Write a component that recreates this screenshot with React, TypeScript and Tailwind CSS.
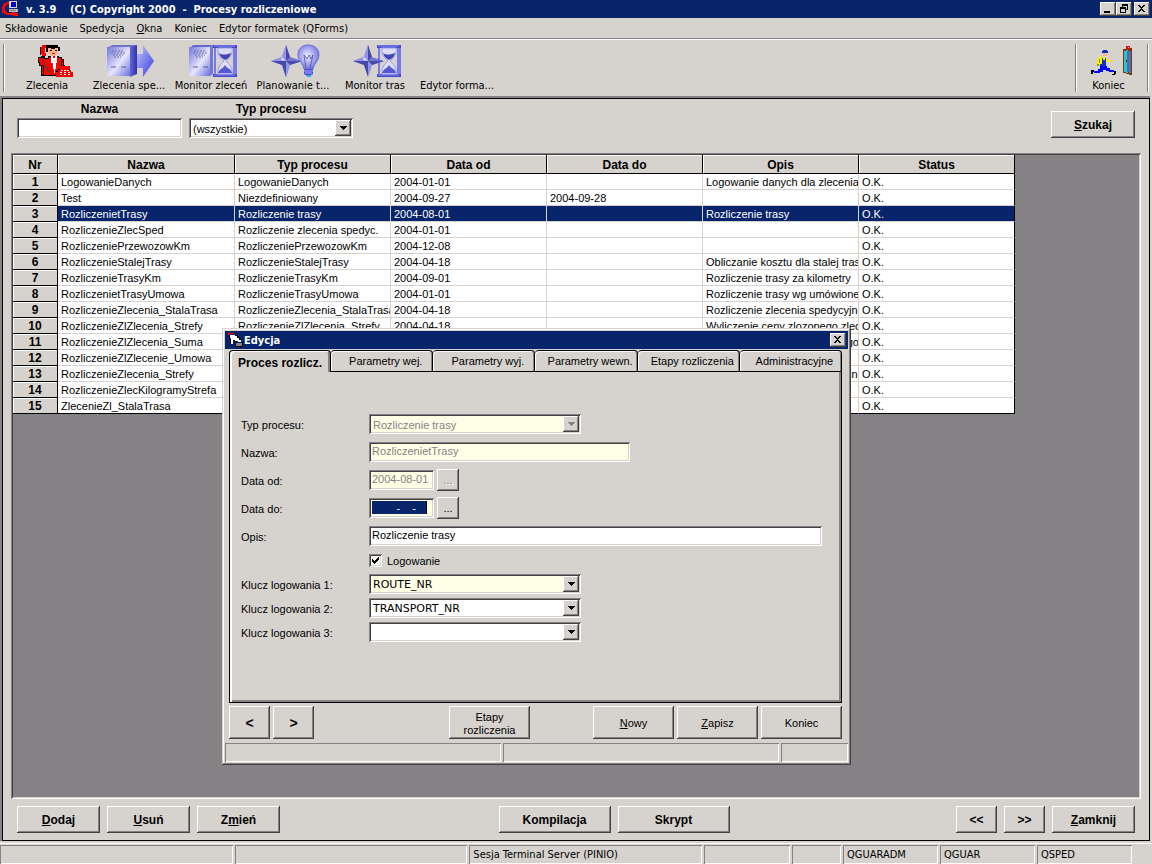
import clsx from "clsx";
import { ButtonHTMLAttributes, InputHTMLAttributes, PropsWithChildren, ReactNode, useState } from "react";

const RAISED =
  "shadow-[inset_-1px_-1px_0_#424142,inset_1px_1px_0_#fff,inset_-2px_-2px_0_#848284]";
const SUNKEN =
  "shadow-[inset_1px_1px_0_#848284,inset_-1px_-1px_0_#fff,inset_2px_2px_0_#424142,inset_-2px_-2px_0_#d6d3ce]";
const PANEL = "shadow-[inset_1px_1px_0_#848284,inset_-1px_-1px_0_#fff]";
const TAHOMA = "font-['DejaVu_Sans_Condensed','Liberation_Sans',sans-serif]";

interface Row {
  name: string;
  type: string;
  from: string;
  to?: string;
  desc?: string;
}

const rows: Row[] = [
  { name: "LogowanieDanych", type: "LogowanieDanych", from: "2004-01-01", desc: "Logowanie danych dla zlecenia" },
  { name: "Test", type: "Niezdefiniowany", from: "2004-09-27", to: "2004-09-28" },
  { name: "RozliczenietTrasy", type: "Rozliczenie trasy", from: "2004-08-01", desc: "Rozliczenie trasy" },
  { name: "RozliczenieZlecSped", type: "Rozliczenie zlecenia spedyc.", from: "2004-01-01" },
  { name: "RozliczeniePrzewozowKm", type: "RozliczeniePrzewozowKm", from: "2004-12-08" },
  { name: "RozliczenieStalejTrasy", type: "RozliczenieStalejTrasy", from: "2004-04-18", desc: "Obliczanie kosztu dla stalej trasy" },
  { name: "RozliczenieTrasyKm", type: "RozliczenieTrasyKm", from: "2004-09-01", desc: "Rozliczenie trasy za kilometry" },
  { name: "RozliczenietTrasyUmowa", type: "RozliczenieTrasyUmowa", from: "2004-01-01", desc: "Rozliczenie trasy wg umówionej" },
  { name: "RozliczenieZlecenia_StalaTrasa", type: "RozliczenieZlecenia_StalaTrasa", from: "2004-04-18", desc: "Rozliczenie zlecenia spedycyjne" },
  { name: "RozliczenieZlZlecenia_Strefy", type: "RozliczenieZlZlecenia_Strefy", from: "2004-04-18", desc: "Wyliczenie ceny zlozonego zlec" },
  { name: "RozliczenieZlZlecenia_Suma", type: "RozliczenieZlZlecenia_Suma", from: "2004-04-18", desc: "Rozliczenie zlecenia zlozonego" },
  { name: "RozliczenieZlZlecenie_Umowa", type: "RozliczenieZlZlecenie_Umowa", from: "2004-04-18" },
  { name: "RozliczenieZlecenia_Strefy", type: "RozliczenieZlecenia_Strefy", from: "2004-04-18", desc: "Rozliczenie zlecenia spedycyjne" },
  { name: "RozliczenieZlecKilogramyStrefa", type: "RozliczenieZlecKilogramyStrefa", from: "2004-04-18" },
  { name: "ZlecenieZl_StalaTrasa", type: "ZlecenieZl_StalaTrasa", from: "2004-04-18" },
];

const columns = ["Nr", "Nazwa", "Typ procesu", "Data od", "Data do", "Opis", "Status"];

const tabs = [
  "Proces rozlicz.",
  "Parametry wej.",
  "Parametry wyj.",
  "Parametry wewn.",
  "Etapy rozliczenia",
  "Administracyjne",
];

/* ---------- icons ---------- */

const Gradients = () => (
  <svg width="0" height="0" className="absolute" aria-hidden="true">
    <defs>
      <linearGradient id="page" x1="0" y1="0" x2="1" y2="1">
        <stop offset="0" stopColor="#7476dc" />
        <stop offset="0.55" stopColor="#e6e6fc" />
        <stop offset="1" stopColor="#6a6ce0" />
      </linearGradient>
      <linearGradient id="side" x1="0" y1="0" x2="1" y2="0">
        <stop offset="0" stopColor="#6466dc" />
        <stop offset="1" stopColor="#3032a0" />
      </linearGradient>
      <linearGradient id="arrow" x1="0" y1="0" x2="1" y2="1">
        <stop offset="0" stopColor="#c4c6fa" />
        <stop offset="1" stopColor="#3436e0" />
      </linearGradient>
      <radialGradient id="bulb" cx="0.45" cy="0.45" r="0.6">
        <stop offset="0" stopColor="#f0f0ff" />
        <stop offset="1" stopColor="#6a6cdc" />
      </radialGradient>
    </defs>
  </svg>
);

const Sheet = () => (
  <g>
    <path d="M2 2 4 0H24L21 2Z" fill="#6668c8" />
    <path d="M0 2H21V31H0Z" fill="url(#page)" />
    <path d="M21 2 24 0V29L21 31Z" fill="#7476d4" />
    <path d="M5 6H17M4 8H19M6 10H16M7 12H14" stroke="#5a5c94" strokeDasharray="2 1" strokeWidth="0.8" />
    <path d="M4 22H9M14 22H19" stroke="#5a5c94" />
  </g>
);

const Hourglass = () => (
  <g>
    <path d="M0 0H24V3H0ZM0 29H24V32H0Z" fill="#4648c4" />
    <path d="M1 1H22M1 30H22" stroke="#8c8eff" />
    <path d="M2 3V29M21 3V29M23 3V29" stroke="#5254f0" strokeWidth="1.4" />
    <path d="M5 3H19C20 10 16 13 13 16C16 19 20 22 19 29H5C4 22 8 19 11 16C8 13 4 10 5 3Z" fill="#dcdcfa" stroke="#9a9cee" />
    <path d="M6 8C10 11 15 9 18 8C17 13 14 14 12 15C10 14 7 12 6 8Z" fill="#4446b4" />
    <path d="M5 28C7 23 10 24 12 20C14 24 18 23 19 28Z" fill="#5658cc" />
  </g>
);

const Star = () => (
  <g>
    <path d="M15 0 19 12 31 16 19 20 15 32 11 20 0 16 11 12Z" fill="#7476d0" />
    <path d="M15 0 19 12 15 16ZM31 16 19 20 15 16ZM15 32 11 20 15 16ZM0 16 11 20 15 16Z" fill="#484aa8" />
    <path d="M15 0 11 12 15 16ZM0 16 11 12 15 16ZM15 32 19 20 15 16Z" fill="#9294ec" />
    <path d="M11 12 15 16 10 15Z" fill="#dcdcfc" />
  </g>
);

const Bulb = () => (
  <g>
    <path d="M10 0C4 0 0 4 0 10C0 16 5 18 6 24H15C16 18 21 16 21 10C21 4 17 0 10 0Z" fill="url(#bulb)" stroke="#6c6edc" />
    <path d="M8 23 6 10 9 14 11 10 13 14 15 10 12 23" fill="none" stroke="#5052a8" strokeWidth="0.8" />
    <path d="M6 24H15V29L12 31H9L6 29Z" fill="#4c4ed8" />
    <path d="M6 26H15M7 28H14" stroke="#a8aaff" />
    <path d="M9 30H13V32H9Z" fill="#29aaff" />
  </g>
);

const IconBox = ({ children }: PropsWithChildren) => (
  <svg width="48" height="32" viewBox="0 0 48 32" className="ml-1 overflow-visible" aria-hidden="true">
    {children}
  </svg>
);

const CallerIcon = () => (
  <IconBox>
    <g shapeRendering="crispEdges">
      <path d="M21 0H33V2H35V6H33V4H24V7H21Z" fill="#000" />
      <path d="M23 3H26V4H30V3H33V9H31V11H25V9H23Z" fill="#ffb68c" />
      <path d="M25 5H27V6H25ZM30 5H32V6H30Z" fill="#000" />
      <path d="M27 8H30V9H27Z" fill="#f00" />
      <path d="M13 12H16V11H20V13H23V11H34V12H37V14H39V20H40V31H16V21H14V18H13Z" fill="#000" />
      <path d="M14 13H19V14H24V12H33V13H36V15H38V30H17V20H15V17H14Z" fill="#f00" />
      <path d="M16 2H17V0H21V3H20V8H21V11H17V9H16Z" fill="#f00" />
      <path d="M15 2H16V10H15ZM17 11H20V12H17Z" fill="#000" />
      <path d="M26 11H32V18H31V24H30V28H29V24H28V18H26Z" fill="#fff" />
      <path d="M28 11H30V13H28Z" fill="#f00" />
      <path d="M18 13H19V17H20V20H21V22H23V25H25V28H27V30H26V28H24V26H22V23H20V20H19V17H18Z" fill="#424142" />
      <path d="M18 20H19V31H18ZM36 16H37V21H36Z" fill="#000" />
      <path d="M33 21H45V24H43V25H46V27H48V32H31V27H33V25H35V24H33Z" fill="#f00" />
      <path d="M33 24H35V25H33V27H31V26H32V25H33ZM43 24H45V25H43Z" fill="#000" />
      <path d="M36 25H38V26H36ZM39 25H41V26H39ZM42 25H44V26H42ZM35 27H37V28H35ZM39 27H41V28H39ZM43 27H45V28H43ZM35 29H37V30H35ZM39 29H41V30H39ZM43 29H45V30H43Z" fill="#fff" />
    </g>
  </IconBox>
);

const SendIcon = () => (
  <IconBox>
    <path d="M1 2 6 0H30L24 3Z" fill="#7072cc" />
    <path d="M0 2H23V31H0Z" fill="url(#page)" />
    <path d="M23 2 30 0V29L23 32Z" fill="url(#side)" />
    <path d="M5 6H17M4 8H19M6 10H16M7 12H14" stroke="#5a5c94" strokeDasharray="2 1" strokeWidth="0.8" />
    <path d="M4 22H9M14 22H19" stroke="#5a5c94" />
    <path d="M30 9H36V0L47 16 36 32V23H30Z" fill="url(#arrow)" />
  </IconBox>
);

const MonitorOrdersIcon = () => (
  <IconBox>
    <Sheet />
    <g transform="translate(24 0)">
      <Hourglass />
    </g>
  </IconBox>
);

const PlanIcon = () => (
  <IconBox>
    <Star />
    <g transform="translate(27 0)">
      <Bulb />
    </g>
  </IconBox>
);

const MonitorRoutesIcon = () => (
  <IconBox>
    <Star />
    <g transform="translate(24 0)">
      <Hourglass />
    </g>
  </IconBox>
);

const ExitIcon = () => (
  <svg width="42" height="32" viewBox="0 0 42 32" className="ml-1.5" aria-hidden="true">
    <g shapeRendering="crispEdges">
      <path d="M12 5H16V6H17V8H11V6H12Z" fill="#0030c0" />
      <path d="M12 8H16V10H17V11H12Z" fill="#ffb68c" />
      <path d="M8 12H15V14H17V15H20V17H15V21H8V19H6V14H8Z" fill="#f7f300" />
      <path d="M20 15H23V16H20Z" fill="#ffb68c" />
      <path d="M8 14H9V18H8ZM6 19H8V21H6Z" fill="#949200" />
      <path d="M11 13H12V15H14V13H15V21H9V19H11Z" fill="#1030d0" />
      <path d="M9 21H16V23H19V25H23V27H18V26H15V25H12V27H9V28H3V26H7V24H9Z" fill="#0000ff" />
      <path d="M0 25H3V27H2V29H0ZM23 26H25V29H24V30H21V29H23Z" fill="#000" />
      <path d="M32 4H35V3H41V30H38V29H35V28H32Z" fill="#7b3910" />
      <path d="M33 6H35V5H37V28H35V27H33Z" fill="#29c6ce" />
      <path d="M36 6H40V28H38V27H36Z" fill="#4a6dad" />
      <path d="M35 15H36V17H35Z" fill="#000" />
      <path d="M35 1H39V4H38V5H36V3H35Z" fill="#f00" />
      <path d="M37 2H38V3H37Z" fill="#fff" />
    </g>
  </svg>
);

const AppIcon = () => (
  <svg width="17" height="16" viewBox="0 0 17 16" shapeRendering="crispEdges" aria-hidden="true">
    <path d="M4 1H8V3H5V5H3V10H5V12H10V10H13V12H16V15H11V14H4V13H2V12H0V5H1V3H2V2H4Z" fill="#f00" />
    <path d="M7 0H15V7H7Z" fill="#d6d3ce" />
    <path d="M9 1H14V6H9Z" fill="#0000c8" />
    <path d="M7 8H16V11H7Z" fill="#bdbabd" />
    <path d="M8 9H14V10H8Z" fill="#848284" />
  </svg>
);

const HandIcon = () => (
  <svg width="16" height="16" viewBox="0 0 16 16" shapeRendering="crispEdges" aria-hidden="true">
    <path d="M0 1H6V2H2V3H0Z" fill="#f00" />
    <path d="M2 3H7V4H9V6H11V8H13V10H10V9H9V11H8V9H7V10H6V8H5V12H3V6H2Z" fill="#fff" />
    <path d="M1 3H2V7H3V12H2V8H1ZM7 3H9V4H7ZM9 4H11V6H9ZM11 6H13V8H11ZM6 8H7V10H6ZM8 9H9V11H8Z" fill="#000" />
    <path d="M8 11H14V14H8Z" fill="#848284" />
    <path d="M8 14H14V15H8ZM7 11H8V14H7ZM14 10H15V14H14Z" fill="#000" />
  </svg>
);

const DownArrow = ({ disabled }: { disabled?: boolean }) => (
  <svg width="7" height="4" viewBox="0 0 7 4" shapeRendering="crispEdges" aria-hidden="true">
    <path d="M0 0H7V1H6V2H5V3H4V4H3V3H2V2H1V1H0Z" fill={disabled ? "#848284" : "#000"} />
  </svg>
);

const glyphs = {
  min: "M2 8H8V10H2Z",
  restore: "M4 1H10V7H8V6H9V3H5V4H4ZM2 4H8V10H2ZM3 6V9H7V6Z",
  close: "M2 2H4V3H5V4H6V3H7V2H9V3H8V4H7V5H6V6H7V7H8V8H9V9H7V8H6V7H5V8H4V9H2V8H3V7H4V6H5V5H4V4H3V3H2Z",
};

/* ---------- controls ---------- */

const CaptionButton = ({ kind, label }: { kind: keyof typeof glyphs; label: string }) => (
  <button type="button" aria-label={label} className={clsx("flex h-[14px] w-4 justify-center bg-[#d6d3ce] pt-px", RAISED)}>
    <svg width="12" height="12" viewBox="0 0 12 12" shapeRendering="crispEdges">
      <path d={glyphs[kind]} fillRule="evenodd" />
    </svg>
  </button>
);

const PushButton = ({ className, children, ...props }: ButtonHTMLAttributes<HTMLButtonElement>) => (
  <button type="button" {...props} className={clsx("bg-[#d6d3ce] text-center", RAISED, className)}>
    {children}
  </button>
);

const TextBox = ({ className, ...props }: InputHTMLAttributes<HTMLInputElement>) => (
  <input
    type="text"
    {...props}
    className={clsx("h-5 min-w-0 px-[3px] pb-0.5 outline-none disabled:text-[#848284]", SUNKEN, className)}
  />
);

interface ComboProps {
  id: string;
  value: string;
  disabled?: boolean;
  className?: string;
}

const Combo = ({ id, value, disabled, className }: ComboProps) => (
  <div className={clsx("flex h-5 p-0.5", SUNKEN, className)}>
    <select
      id={id}
      disabled={disabled}
      defaultValue={value}
      className="min-w-0 flex-1 appearance-none pt-px pl-0.5 opacity-100 outline-none disabled:text-[#848284]"
    >
      <option value={value}>{value}</option>
    </select>
    <span className={clsx("pointer-events-none flex w-4 items-center justify-center bg-[#d6d3ce]", RAISED)}>
      <DownArrow disabled={disabled} />
    </span>
  </div>
);

const ToolButton = ({ icon, label }: { icon?: ReactNode; label: string }) => (
  <button type="button" className="flex w-[82px] flex-col items-center">
    <span className="flex h-8 items-center">{icon}</span>
    <span className="leading-[17px]">{label}</span>
  </button>
);

const Field = ({ id, label, children }: PropsWithChildren<{ id: string; label: string }>) => (
  <div className="flex h-5 items-center">
    <label htmlFor={id} className="w-32 pt-0.5">
      {label}
    </label>
    {children}
  </div>
);

/* ---------- process table ---------- */

const ProcessTable = () => (
  <table className="w-[1002px] table-fixed border-separate border-spacing-0 bg-white">
    <colgroup>
      <col className="w-[45px]" />
      <col className="w-[177px]" />
      <col className="w-[156px]" />
      <col className="w-[156px]" />
      <col className="w-[156px]" />
      <col className="w-[156px]" />
      <col className="w-[156px]" />
    </colgroup>
    <thead>
      <tr className="h-[19px]">
        {columns.map((column) => (
          <th
            key={column}
            className="border-r border-b border-black bg-[#d6d3ce] p-0 pt-px text-xs leading-4 shadow-[inset_1px_1px_0_#fff]"
          >
            {column}
          </th>
        ))}
      </tr>
    </thead>
    <tbody>
      {rows.map((row, index) => {
        const selected = index === 2;
        return (
          <tr key={row.name} className={clsx("h-4", selected && "bg-[#08246b] text-white")}>
            <th className="border-r border-b border-black bg-[#d6d3ce] p-0 pt-px text-xs leading-[14px] text-black shadow-[inset_1px_1px_0_#fff]">
              {index + 1}
            </th>
            {[row.name, row.type, row.from, row.to, row.desc, "O.K."].map((value, cell) => (
              <td
                key={cell}
                className={clsx(
                  "overflow-hidden border-r border-b p-0 pt-px pl-[3px] leading-[14px] whitespace-nowrap",
                  cell === 5 ? "border-r-black" : "border-r-[#d6d3ce]",
                  index === rows.length - 1 ? "border-b-black" : "border-b-[#d6d3ce]"
                )}
              >
                {value}
              </td>
            ))}
          </tr>
        );
      })}
    </tbody>
  </table>
);

/* ---------- edit dialog ---------- */

const EditDialog = () => {
  const [active, setActive] = useState(0);
  const [logging, setLogging] = useState(true);

  return (
    <div
      role="dialog"
      aria-label="Edycja"
      className="absolute top-[328px] left-[222px] w-[629px] bg-[#d6d3ce] p-[3px] shadow-[inset_-1px_-1px_0_#424142,inset_1px_1px_0_#d6d3ce,inset_-2px_-2px_0_#848284,inset_2px_2px_0_#fff]"
    >
      <div className={clsx("flex h-[18px] items-center bg-[#08246b] pr-0.5 pl-[3px] font-bold text-white", TAHOMA)}>
        <HandIcon />
        <span className="flex-1 pt-px">Edycja</span>
        <CaptionButton kind="close" label="Zamknij okno" />
      </div>

      <div className="mt-px ml-1 grid w-[613px] grid-cols-6" role="tablist">
        {tabs.map((tab, index) => (
          <button
            key={tab}
            type="button"
            role="tab"
            aria-selected={active === index}
            onClick={() => setActive(index)}
            className={clsx(
              "h-[22px] rounded-t-[4px] border-t border-r border-black whitespace-nowrap",
              active === index
                ? "border-l pt-[3px] text-xs font-bold shadow-[inset_2px_1px_0_#fff,inset_-2px_0_0_#848284]"
                : "border-b pl-2 shadow-[inset_1px_1px_0_#fff,inset_-1px_0_0_#848284]"
            )}
          >
            {tab}
          </button>
        ))}
      </div>

      <div className="ml-1 w-[613px] border-r border-b border-l border-black px-[11px] pt-[42px] pb-[60px] shadow-[inset_2px_0_0_#fff,inset_-2px_-2px_0_#848284]">
        <div className="flex flex-col gap-2">
          <Field id="typ" label="Typ procesu:">
            <Combo id="typ" value="Rozliczenie trasy" disabled className="w-[212px] bg-[#ffffe7]" />
          </Field>
          <Field id="nazwa" label="Nazwa:">
            <TextBox id="nazwa" defaultValue="RozliczenietTrasy" disabled className="w-[261px] bg-[#ffffe7]" />
          </Field>
          <Field id="od" label="Data od:">
            <TextBox id="od" defaultValue="2004-08-01" disabled className="w-[65px] bg-[#ffffe7]" />
            <PushButton
              disabled
              aria-label="Wybierz datę od"
              className="ml-[3px] h-[22px] w-[22px] text-[#848284] [text-shadow:1px_1px_0_#fff]"
            >
              ...
            </PushButton>
          </Field>
          <Field id="do" label="Data do:">
            <div className={clsx("h-5 w-[65px] bg-[#ffffe7] p-[3px]", SUNKEN)}>
              <input
                id="do"
                type="text"
                defaultValue={"        -    -  "}
                className="block h-[13px] w-[55px] border-r border-black bg-[#08246b] text-white outline-none"
              />
            </div>
            <PushButton aria-label="Wybierz datę do" className="ml-[3px] h-[22px] w-[22px]">
              ...
            </PushButton>
          </Field>
          <Field id="opis" label="Opis:">
            <TextBox id="opis" defaultValue="Rozliczenie trasy" className="w-[453px] bg-white" />
          </Field>
        </div>
        <div className="mt-1 flex flex-col gap-1">
          <label className="ml-32 flex h-5 items-center gap-1.5">
            <input
              type="checkbox"
              checked={logging}
              onChange={() => setLogging(!logging)}
              className={clsx("peer h-[13px] w-[13px] appearance-none bg-white", SUNKEN)}
            />
            <svg
              width="7"
              height="7"
              viewBox="0 0 7 7"
              shapeRendering="crispEdges"
              className="pointer-events-none invisible -ml-4 peer-checked:visible"
            >
              <path d="M0 2H1V3H2V4H3V3H4V2H5V1H6V0H7V3H6V4H5V5H4V6H3V7H2V6H1V5H0Z" />
            </svg>
            <span className="ml-0.5 pt-0.5">Logowanie</span>
          </label>
          <Field id="klucz1" label="Klucz logowania 1:">
            <Combo id="klucz1" value="ROUTE_NR" className="w-[212px] bg-[#ffffe7] font-['DejaVu_Sans',sans-serif]" />
          </Field>
          <Field id="klucz2" label="Klucz logowania 2:">
            <Combo id="klucz2" value="TRANSPORT_NR" className="w-[212px] bg-white font-['DejaVu_Sans',sans-serif]" />
          </Field>
          <Field id="klucz3" label="Klucz logowania 3:">
            <Combo id="klucz3" value="" className="w-[212px] bg-white" />
          </Field>
        </div>
      </div>

      <div className="mt-[3px] ml-1 flex w-[613px] gap-[3px]">
        <PushButton className="h-[33px] w-[41px] text-sm font-bold">&lt;</PushButton>
        <PushButton className="h-[33px] w-[41px] text-sm font-bold">&gt;</PushButton>
        <PushButton className="mr-[60px] ml-auto h-[33px] w-[81px] pt-0.5 leading-[13px]">
          Etapy
          <br />
          rozliczenia
        </PushButton>
        <PushButton className="h-[33px] w-[81px]">
          <u>N</u>owy
        </PushButton>
        <PushButton className="h-[33px] w-[81px]">
          <u>Z</u>apisz
        </PushButton>
        <PushButton className="h-[33px] w-[81px]">Koniec</PushButton>
      </div>

      <div className="mt-1 flex h-[19px] gap-0.5">
        <div className={clsx("flex-1", PANEL)} />
        <div className={clsx("flex-1", PANEL)} />
        <div className={clsx("w-[67px]", PANEL)} />
      </div>
    </div>
  );
};

/* ---------- main window ---------- */

export default function App() {
  return (
    <div className="relative flex min-h-screen flex-col bg-[#d6d3ce] font-['Liberation_Sans',Arial,sans-serif] text-[11px] leading-[14px] text-black">
      <Gradients />
      <header className={TAHOMA}>
        <div className="flex h-[18px] items-center bg-[#08246b] pr-0.5 pl-0.5 text-white">
          <AppIcon />
          <h1 className="flex-1 pt-px pl-[7px] font-bold whitespace-pre">
            {"v. 3.9    (C) Copyright 2000  -  Procesy rozliczeniowe"}
          </h1>
          <CaptionButton kind="min" label="Minimalizuj" />
          <CaptionButton kind="restore" label="Przywróć" />
          <span className="w-0.5" />
          <CaptionButton kind="close" label="Zamknij program" />
        </div>
        <nav className="flex h-5 items-center gap-3 pt-px pl-[5px]">
          <button type="button">Składowanie</button>
          <button type="button">Spedycja</button>
          <button type="button">
            <u>O</u>kna
          </button>
          <button type="button">Koniec</button>
          <button type="button">Edytor formatek (QForms)</button>
        </nav>
        <div className="flex h-[58px] border-t border-[#848284] px-[3px] pt-[5px] shadow-[inset_0_1px_0_#fff]">
          <div className="h-12 w-[3px] border-l border-[#848284] shadow-[inset_1px_0_0_#fff]" />
          <div className="flex flex-1 pt-px">
            <ToolButton icon={<CallerIcon />} label="Zlecenia" />
            <ToolButton icon={<SendIcon />} label="Zlecenia spe..." />
            <ToolButton icon={<MonitorOrdersIcon />} label="Monitor zleceń" />
            <ToolButton icon={<PlanIcon />} label="Planowanie t..." />
            <ToolButton icon={<MonitorRoutesIcon />} label="Monitor tras" />
            <ToolButton label="Edytor forma..." />
          </div>
          <div className="flex h-12 w-[72px] justify-center border-l border-[#848284] pt-px pr-1.5 shadow-[inset_1px_0_0_#fff]">
            <ToolButton icon={<ExitIcon />} label="Koniec" />
          </div>
          <div className="h-12 w-0.5 border-l border-[#848284] bg-white" />
        </div>
      </header>

      <main className="mr-0.5 flex flex-1 flex-col border-t-2 border-l-2 border-[#848284]">
        <div className="flex flex-1 flex-col border border-black">
          <div className="flex items-end gap-[7px] px-[14px] pt-0.5">
            <div className="flex w-[165px] flex-col">
              <label htmlFor="szukaj-nazwa" className="text-center text-xs leading-[17px] font-bold">
                Nazwa
              </label>
              <TextBox id="szukaj-nazwa" className="bg-white" />
            </div>
            <div className="flex w-[164px] flex-col">
              <label htmlFor="szukaj-typ" className="text-center text-xs leading-[17px] font-bold">
                Typ procesu
              </label>
              <Combo id="szukaj-typ" value="(wszystkie)" className="bg-white" />
            </div>
            <PushButton className="ml-auto h-[27px] w-[84px] text-xs font-bold">
              <u>S</u>zukaj
            </PushButton>
          </div>

          <div className={clsx("mx-2 mt-[15px] flex-1 bg-[#848284] p-0.5", SUNKEN)}>
            <ProcessTable />
          </div>

          <div className="flex justify-between px-[14px] pt-[7px] pb-[7px] text-xs font-bold">
            <div className="flex gap-[7px]">
              <PushButton className="h-[27px] w-[83px]">
                <u>D</u>odaj
              </PushButton>
              <PushButton className="h-[27px] w-[83px]">
                <u>U</u>suń
              </PushButton>
              <PushButton className="h-[27px] w-[83px]">
                Z<u>m</u>ień
              </PushButton>
            </div>
            <div className="flex gap-[7px] pr-2">
              <PushButton className="h-[27px] w-[112px]">Kompilacja</PushButton>
              <PushButton className="h-[27px] w-[112px]">Skrypt</PushButton>
            </div>
            <div className="flex gap-[7px]">
              <PushButton className="h-[27px] w-[41px]">&lt;&lt;</PushButton>
              <PushButton className="h-[27px] w-[41px]">&gt;&gt;</PushButton>
              <PushButton className="h-[27px] w-[83px]">
                <u>Z</u>amknij
              </PushButton>
            </div>
          </div>
        </div>
      </main>

      <footer className={clsx("mt-0.5 flex h-[21px] gap-0.5 border-t border-white pt-px pr-5 leading-[19px]", TAHOMA)}>
        <div className={clsx("flex-1", PANEL)} />
        <div className={clsx("flex-1", PANEL)} />
        <div className={clsx("min-w-0 flex-1 indent-1", PANEL)}>Sesja Terminal Server (PINIO)</div>
        <div className={clsx("w-[86px]", PANEL)} />
        <div className={clsx("w-[49px]", PANEL)} />
        <div className={clsx("w-[95px] indent-1", PANEL)}>QGUARADM</div>
        <div className={clsx("w-[95px] indent-1", PANEL)}>QGUAR</div>
        <div className={clsx("w-[95px] indent-1", PANEL)}>QSPED</div>
      </footer>

      <EditDialog />
    </div>
  );
}
